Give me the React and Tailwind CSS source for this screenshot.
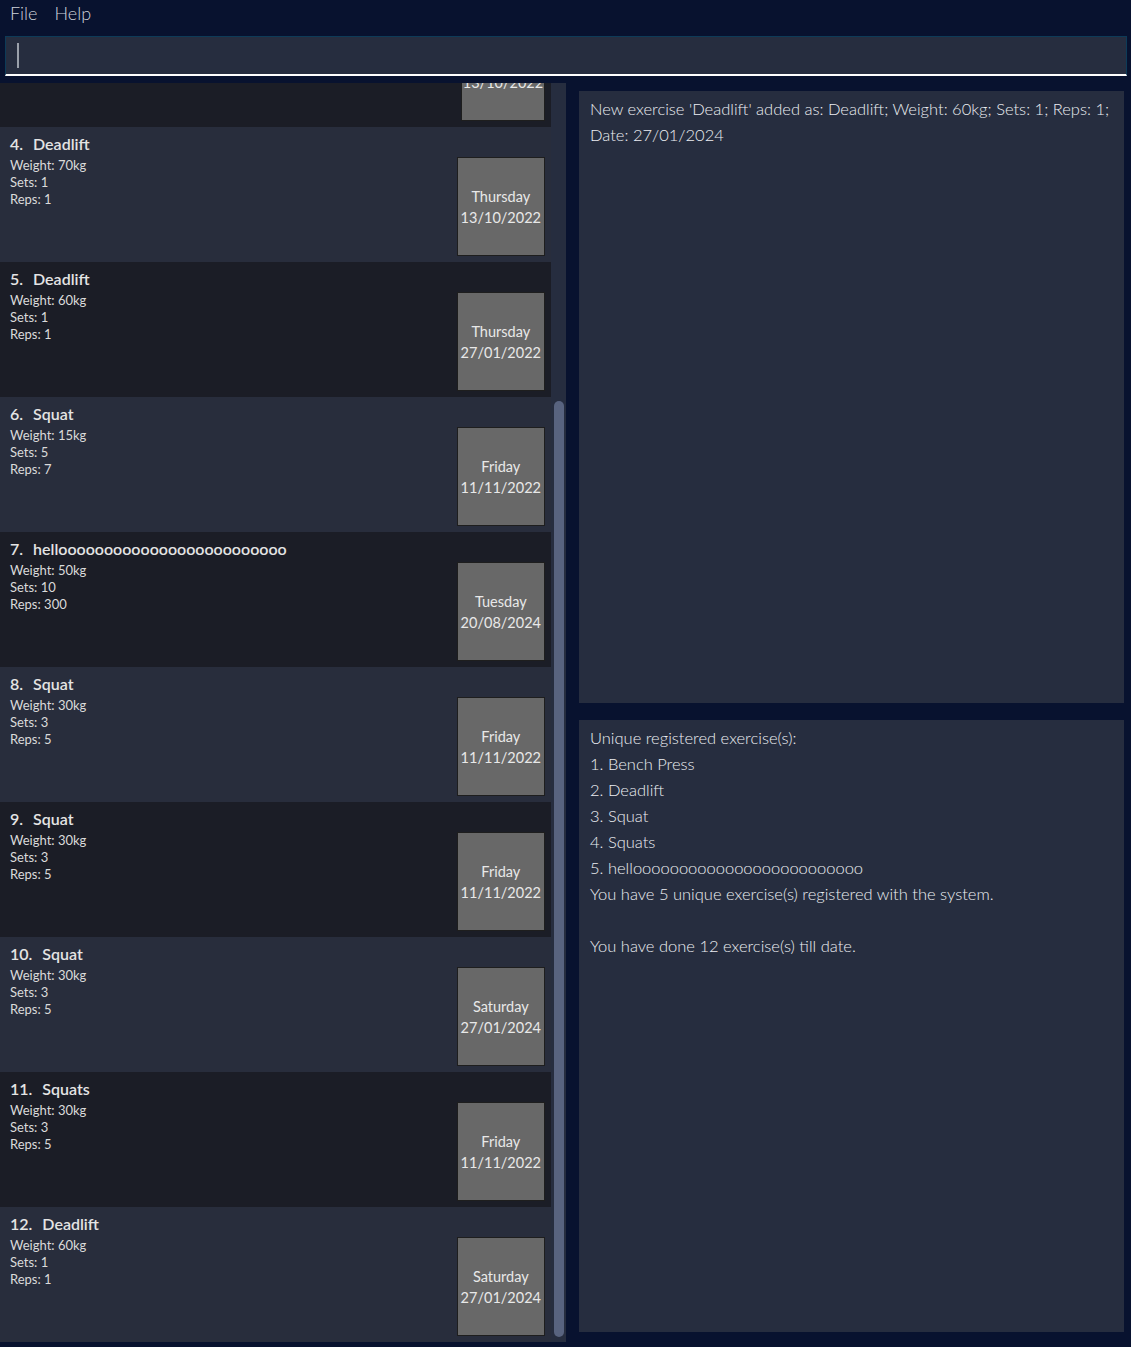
import React from 'react';

const hello = 'hell' + 'o'.repeat(25);

const rows = [
  { n: 4, name: 'Deadlift', weight: '70kg', sets: 1, reps: 1, day: 'Thursday', date: '13/10/2022' },
  { n: 5, name: 'Deadlift', weight: '60kg', sets: 1, reps: 1, day: 'Thursday', date: '27/01/2022' },
  { n: 6, name: 'Squat', weight: '15kg', sets: 5, reps: 7, day: 'Friday', date: '11/11/2022' },
  { n: 7, name: hello, weight: '50kg', sets: 10, reps: 300, day: 'Tuesday', date: '20/08/2024' },
  { n: 8, name: 'Squat', weight: '30kg', sets: 3, reps: 5, day: 'Friday', date: '11/11/2022' },
  { n: 9, name: 'Squat', weight: '30kg', sets: 3, reps: 5, day: 'Friday', date: '11/11/2022' },
  { n: 10, name: 'Squat', weight: '30kg', sets: 3, reps: 5, day: 'Saturday', date: '27/01/2024' },
  { n: 11, name: 'Squats', weight: '30kg', sets: 3, reps: 5, day: 'Friday', date: '11/11/2022' },
  { n: 12, name: 'Deadlift', weight: '60kg', sets: 1, reps: 1, day: 'Saturday', date: '27/01/2024' },
];

const font = { fontFamily: '"Lato", "Noto Sans", sans-serif' };

const ExerciseRow = ({ row }) => (
  <div className={`flex h-[135px] shrink-0 justify-between ${row.n % 2 ? 'bg-[#1b1d26]' : 'bg-[#282d3c]'}`}>
    <div className="pl-[10px] pt-[6px] text-[#e4e4e4]">
      <div className="text-[16px] leading-[22px] font-semibold whitespace-pre">
        {row.n}.{'  '}<span className="ml-[2px]">{row.name}</span>
      </div>
      <div className="mt-[2px] text-[13px] leading-[17px] text-[#dadada]">
        <div>Weight: {row.weight}</div>
        <div>Sets: {row.sets}</div>
        <div>Reps: {row.reps}</div>
      </div>
    </div>
    <div className="mr-[6px] mt-[30px] flex h-[99px] flex-col justify-center border border-[#1e1e1e] bg-[#686868] px-[3px] text-center text-[14.5px] leading-[21px] text-[#e8e8e8]">
      <div>{row.day}</div>
      <div>{row.date}</div>
    </div>
  </div>
);

export default function App() {
  return (
    <div className="flex h-[1347px] w-[1131px] flex-col overflow-hidden bg-[#08122f]" style={font}>
      {/* menu bar */}
      <div className="flex h-[30px] items-start gap-[17px] px-[10px] pt-[1px] text-[18px] leading-[24px] font-light text-[#d0d4db]">
        <span>File</span>
        <span>Help</span>
      </div>

      {/* command box */}
      <div className="ml-[5px] mr-[4px] mt-[6px] flex h-[40px] items-center border border-b-2 border-[#0d3b58] border-b-white bg-[#262d3f] px-[11px]">
        <div className="h-[25px] w-[2px] bg-[#9aa0aa]" />
      </div>

      <div className="mt-[7px] flex min-h-0 flex-1">
        {/* exercise list, scrolled so row 3 is mostly out of view */}
        <div className="flex h-[1259px] w-[566px] overflow-hidden">
          <div className="flex w-[551px] flex-col overflow-hidden">
            <div className="flex h-[44px] shrink-0 justify-end bg-[#1b1d26]">
              <div className="mr-[6px] h-[38px] w-[84px] overflow-hidden border-x border-b border-[#1e1e1e] bg-[#686868] text-center text-[14.5px] leading-[21px] text-[#e8e8e8]">
                <div className="mt-[-11px]">13/10/2022</div>
              </div>
            </div>
            {rows.map((row) => (
              <ExerciseRow key={row.n} row={row} />
            ))}
          </div>
          <div className="w-[15px] bg-[#262d3f] px-[3px] pt-[318px] pb-[5px]">
            <div className="h-full w-[10px] rounded-full bg-[#58637f]" />
          </div>
        </div>

        {/* result panels */}
        <div className="ml-[13px] flex w-[545px] flex-col gap-[17px] pt-[8px] text-[16.5px] font-light leading-[26px] text-[#eceef2]">
          <div className="h-[612px] bg-[#262d3f] px-[11px] py-[5px]">
            New exercise 'Deadlift' added as: Deadlift; Weight: 60kg; Sets: 1; Reps: 1; Date: 27/01/2024
          </div>
          <div className="h-[612px] bg-[#262d3f] px-[11px] py-[5px]">
            <div>Unique registered exercise(s):</div>
            <div>1. Bench Press</div>
            <div>2. Deadlift</div>
            <div>3. Squat</div>
            <div>4. Squats</div>
            <div>5. {hello}</div>
            <div>You have 5 unique exercise(s) registered with the system.</div>
            <div className="h-[26px]" />
            <div>You have done 12 exercise(s) till date.</div>
          </div>
        </div>
      </div>
    </div>
  );
}
